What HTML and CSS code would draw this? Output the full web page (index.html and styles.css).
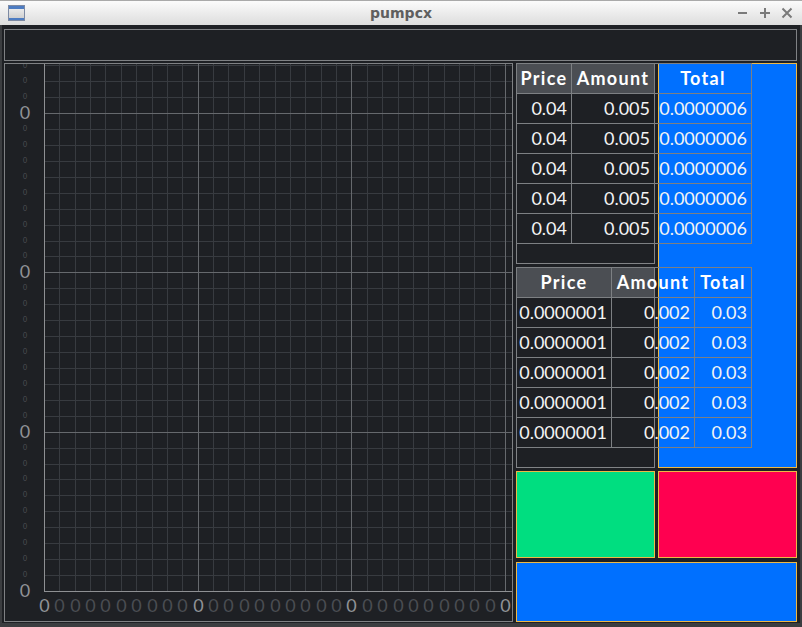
FILE: index.html
```html
<!DOCTYPE html>
<html>
<head>
<meta charset="utf-8">
<title>pumpcx</title>
<link rel="stylesheet" href="styles.css">
</head>
<body>
<div class="window">
  <div class="titlebar">
    <svg class="app-icon" width="17" height="16" viewBox="0 0 17 16">
      <defs>
        <linearGradient id="ig" x1="0" y1="0" x2="0" y2="1">
          <stop offset="0" stop-color="#f4f4f4"/>
          <stop offset="1" stop-color="#c9c9c9"/>
        </linearGradient>
      </defs>
      <rect x="0.5" y="0.5" width="16" height="15" fill="url(#ig)" stroke="#7d8aa3"/>
      <rect x="1" y="1" width="15" height="3" fill="#4d7cc2"/>
      <rect x="1" y="13" width="15" height="2" fill="#4d7cc2"/>
    </svg>
    <div class="title">pumpcx</div>
    <svg class="controls" width="60" height="24" viewBox="0 0 60 24">
      <g stroke="#7a7a7a" stroke-width="2" fill="none">
        <path d="M2 12H11"/>
        <path d="M24 12H34M29 7V17"/>
        <path d="M46.5 7.5L55.5 16.5M55.5 7.5L46.5 16.5"/>
      </g>
    </svg>
  </div>
  <div class="frame">
    <div class="topbar"></div>
    <div class="main">
      <div class="chart">
        <svg width="507" height="557" viewBox="0 0 507 557">
          <g fill="none" stroke-width="1">
            <path class="grid-minor" d="M54.5 0V527M70.5 0V527M85.5 0V527M100.5 0V527M116.5 0V527M131.5 0V527M147.5 0V527M162.5 0V527M177.5 0V527M208.5 0V527M223.5 0V527M239.5 0V527M254.5 0V527M270.5 0V527M285.5 0V527M300.5 0V527M316.5 0V527M331.5 0V527M362.5 0V527M377.5 0V527M393.5 0V527M408.5 0V527M423.5 0V527M439.5 0V527M454.5 0V527M469.5 0V527M485.5 0V527"/>
            <path class="grid-minor" d="M40 511.5H507M40 495.5H507M40 479.5H507M40 463.5H507M40 447.5H507M40 431.5H507M40 415.5H507M40 400.5H507M40 384.5H507M40 352.5H507M40 336.5H507M40 320.5H507M40 304.5H507M40 288.5H507M40 272.5H507M40 256.5H507M40 240.5H507M40 224.5H507M40 192.5H507M40 177.5H507M40 161.5H507M40 145.5H507M40 129.5H507M40 113.5H507M40 97.5H507M40 81.5H507M40 65.5H507M40 33.5H507M40 17.5H507M40 1.5H507"/>
            <path class="grid-major" d="M193.5 0V527M346.5 0V527M500.5 0V527M40 368.5H507M40 208.5H507M40 49.5H507"/>
            <path class="grid-axis" d="M39.5 0V528M39 527.5H507"/>
          </g>
          <g class="lbl-major">
            <text x="39.5" y="540.5">0</text>
            <text x="193.5" y="540.5">0</text>
            <text x="346.5" y="540.5">0</text>
            <text x="500.5" y="540.5">0</text>
            <text x="20" y="525.5">0</text>
            <text x="20" y="366.5">0</text>
            <text x="20" y="206.5">0</text>
            <text x="20" y="47.5">0</text>
          </g>
          <g class="lbl-minor">
            <text x="54.5" y="540.5">0</text>
            <text x="70.5" y="540.5">0</text>
            <text x="85.5" y="540.5">0</text>
            <text x="100.5" y="540.5">0</text>
            <text x="116.5" y="540.5">0</text>
            <text x="131.5" y="540.5">0</text>
            <text x="147.5" y="540.5">0</text>
            <text x="162.5" y="540.5">0</text>
            <text x="177.5" y="540.5">0</text>
            <text x="208.5" y="540.5">0</text>
            <text x="223.5" y="540.5">0</text>
            <text x="239.5" y="540.5">0</text>
            <text x="254.5" y="540.5">0</text>
            <text x="270.5" y="540.5">0</text>
            <text x="285.5" y="540.5">0</text>
            <text x="300.5" y="540.5">0</text>
            <text x="316.5" y="540.5">0</text>
            <text x="331.5" y="540.5">0</text>
            <text x="362.5" y="540.5">0</text>
            <text x="377.5" y="540.5">0</text>
            <text x="393.5" y="540.5">0</text>
            <text x="408.5" y="540.5">0</text>
            <text x="423.5" y="540.5">0</text>
            <text x="439.5" y="540.5">0</text>
            <text x="454.5" y="540.5">0</text>
            <text x="469.5" y="540.5">0</text>
            <text x="485.5" y="540.5">0</text>
          </g>
          <g class="lbl-tiny">
            <text x="20" y="509.5">0</text>
            <text x="20" y="493.5">0</text>
            <text x="20" y="477.5">0</text>
            <text x="20" y="461.5">0</text>
            <text x="20" y="445.5">0</text>
            <text x="20" y="429.5">0</text>
            <text x="20" y="413.5">0</text>
            <text x="20" y="398.5">0</text>
            <text x="20" y="382.5">0</text>
            <text x="20" y="350.5">0</text>
            <text x="20" y="334.5">0</text>
            <text x="20" y="318.5">0</text>
            <text x="20" y="302.5">0</text>
            <text x="20" y="286.5">0</text>
            <text x="20" y="270.5">0</text>
            <text x="20" y="254.5">0</text>
            <text x="20" y="238.5">0</text>
            <text x="20" y="222.5">0</text>
            <text x="20" y="190.5">0</text>
            <text x="20" y="175.5">0</text>
            <text x="20" y="159.5">0</text>
            <text x="20" y="143.5">0</text>
            <text x="20" y="127.5">0</text>
            <text x="20" y="111.5">0</text>
            <text x="20" y="95.5">0</text>
            <text x="20" y="79.5">0</text>
            <text x="20" y="63.5">0</text>
            <text x="20" y="31.5">0</text>
            <text x="20" y="15.5">0</text>
            <text x="20" y="1">0</text>
          </g>
        </svg>
      </div>
      <div class="side">
        <div class="book asks">
          <div class="book-table">
            <div class="cell head">Price</div>
            <div class="cell head">Amount</div>
            <div class="cell head">Total</div>
            <div class="cell">0.04</div><div class="cell">0.005</div><div class="cell">0.0000006</div>
            <div class="cell">0.04</div><div class="cell">0.005</div><div class="cell">0.0000006</div>
            <div class="cell">0.04</div><div class="cell">0.005</div><div class="cell">0.0000006</div>
            <div class="cell">0.04</div><div class="cell">0.005</div><div class="cell">0.0000006</div>
            <div class="cell">0.04</div><div class="cell">0.005</div><div class="cell">0.0000006</div>
          </div>
        </div>
        <div class="depth"></div>
        <div class="book bids">
          <div class="book-table">
            <div class="cell head">Price</div>
            <div class="cell head">Amount</div>
            <div class="cell head">Total</div>
            <div class="cell">0.0000001</div><div class="cell">0.002</div><div class="cell">0.03</div>
            <div class="cell">0.0000001</div><div class="cell">0.002</div><div class="cell">0.03</div>
            <div class="cell">0.0000001</div><div class="cell">0.002</div><div class="cell">0.03</div>
            <div class="cell">0.0000001</div><div class="cell">0.002</div><div class="cell">0.03</div>
            <div class="cell">0.0000001</div><div class="cell">0.002</div><div class="cell">0.03</div>
          </div>
        </div>
        <div class="btn buy"></div>
        <div class="btn sell"></div>
        <div class="status"></div>
      </div>
    </div>
  </div>
</div>
</body>
</html>
```
FILE: styles.css
```css
html, body {
  margin: 0;
  padding: 0;
  background: #1e2024;
}

.window {
  width: 802px;
  height: 627px;
  display: flex;
  flex-direction: column;
  font-family: Lato, "Open Sans", sans-serif;
  overflow: hidden;
}

.titlebar {
  height: 25px;
  box-sizing: border-box;
  border-top: 1px solid #a9a9a9;
  background: linear-gradient(#fbfbfb, #dddddd);
  display: grid;
  grid-template-columns: 1fr auto 1fr;
  align-items: center;
  padding: 0 6px 0 6px;
}

.app-icon {
  display: block;
  margin-left: 2px;
}

.title {
  font-family: "DejaVu Sans", sans-serif;
  font-weight: bold;
  font-size: 14px;
  color: #5f5f5f;
}

.controls {
  display: block;
  justify-self: end;
}

.frame {
  flex: 1;
  display: flex;
  flex-direction: column;
  gap: 2px;
  padding: 4px 3px 1px 2px;
  border-style: solid;
  border-color: #3b3d40;
  border-width: 0 2px 4px 2px;
  background: #1e2024;
}

.topbar {
  height: 32px;
  box-sizing: border-box;
  border: 1px solid #7f8184;
}

.main {
  flex: 1;
  display: flex;
  gap: 3px;
}

.chart {
  width: 509px;
  box-sizing: border-box;
  border: 1px solid #7f8184;
  overflow: hidden;
}

.chart svg {
  display: block;
}

.grid-minor { stroke: #383b40; }
.grid-major { stroke: #66696d; }
.grid-axis { stroke: #8e9093; }

.lbl-major,
.lbl-minor,
.lbl-tiny {
  font-family: Lato, sans-serif;
  text-anchor: middle;
  dominant-baseline: central;
}

.lbl-major { font-size: 18px; fill: #909296; }
.lbl-minor { font-size: 18px; fill: #4a4d52; }
.lbl-tiny { font-size: 7px; fill: #4e5156; }

.side {
  display: grid;
  grid-template-columns: 139px 139px;
  grid-template-rows: 201px 201px 87px 61px;
  gap: 3px;
}

.book {
  box-sizing: border-box;
  border: 1px solid #818386;
  background: linear-gradient(#4b4e53 0 29px, transparent 29px);
}

.asks { grid-column: 1; grid-row: 1; }
.bids { grid-column: 1; grid-row: 2; }

.book-table {
  position: relative;
  z-index: 1;
  display: grid;
  width: max-content;
  margin: -1px 0 0 -1px;
  border-left: 1px solid #7d8083;
  border-top: 1px solid #7d8083;
}

.asks .book-table { grid-template-columns: 55px 83px 97px; }
.bids .book-table { grid-template-columns: 95px 83px 57px; }

.cell {
  height: 30px;
  box-sizing: border-box;
  border-right: 1px solid #7d8083;
  border-bottom: 1px solid #7d8083;
  color: #f4f4f4;
  font-size: 18px;
  line-height: 28px;
  text-align: right;
  padding-right: 4px;
  white-space: nowrap;
}

.cell.head {
  text-align: center;
  padding: 0;
  font-weight: 700;
  letter-spacing: 1.3px;
  color: #ffffff;
}

.depth {
  grid-column: 2;
  grid-row: 1 / 3;
  box-sizing: border-box;
  border: 1px solid #eeb845;
  background: #0070ff;
}

.btn {
  box-sizing: border-box;
  border: 1px solid #eeb845;
}

.buy { grid-column: 1; grid-row: 3; background: #00de80; }
.sell { grid-column: 2; grid-row: 3; background: #ff0050; }

.status {
  grid-column: 1 / 3;
  grid-row: 4;
  margin-top: 1px;
  box-sizing: border-box;
  border: 1px solid #eeb845;
  background: #0070ff;
}
```
